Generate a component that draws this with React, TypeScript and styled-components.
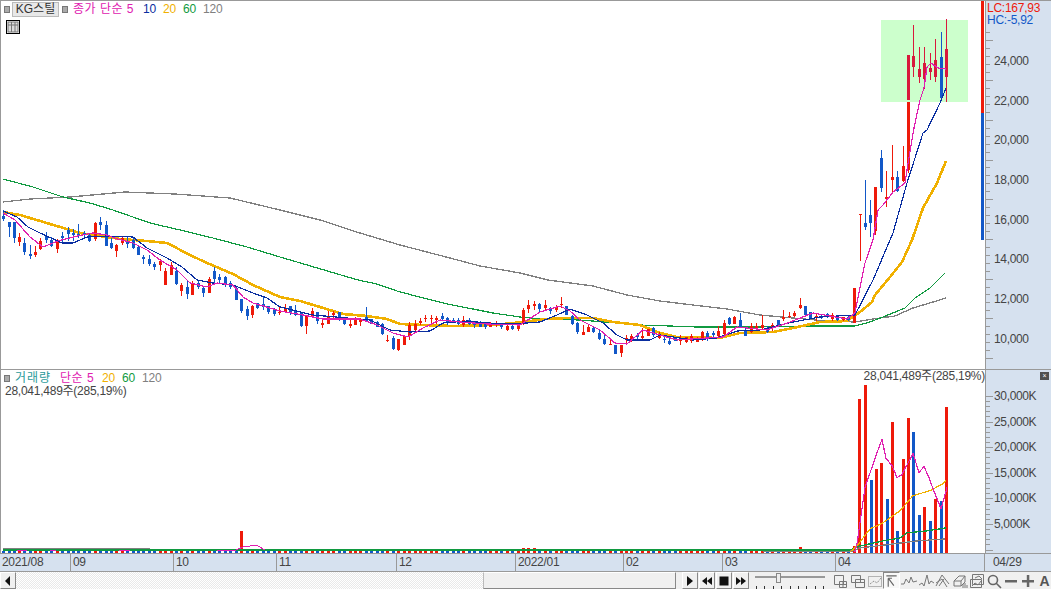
import React from "react";
import styled, { createGlobalStyle } from "styled-components";

const LINE = "#999";
const AXIS_BG = "#d6e1ef";
const TEXT = "#444";
const FONT = `"Liberation Sans", "Noto Sans CJK KR", sans-serif`;
const RED = "#ee1a0a";
const BLUE = "#1258c8";
const CRIMSON = "#d8183c";
const MAGENTA = "#e020b0";
const NAVY = "#0a2ea0";
const ORANGE = "#f0b000";
const GREEN = "#109a40";
const GRAY = "#808080";

type C = [number, string, number, number, number, number];
const candles: C[] = [
  [3,"b",216,219,210,221],[9,"b",222,227,222,237],[14,"b",222,238,222,243],[19,"r",237,242,233,246],[24,"b",243,252,238,255],
  [30,"b",254,256,245,259],[35,"r",252,255,246,257],[40,"r",241,249,238,250],[46,"b",236,240,232,243],[51,"b",240,246,237,247],
  [57,"r",241,249,239,253],[62,"b",236,238,232,242],[68,"b",230,234,227,241],[73,"b",233,235,229,241],[78,"b",234,236,224,238],
  [84,"b",233,235,231,238],[89,"b",235,241,233,242],[95,"r",223,239,222,241],[100,"b",222,225,217,230],[106,"b",225,246,221,246],
  [111,"b",243,248,238,249],[116,"r",245,251,244,257],[122,"r",238,243,236,245],[127,"b",241,244,237,248],[133,"b",240,248,238,249],
  [138,"b",247,255,245,255],[143,"b",257,259,255,264],[149,"b",259,264,255,266],[154,"b",264,267,262,270],[160,"r",261,265,259,271],
  [165,"r",271,285,268,285],[171,"r",265,275,262,275],[176,"b",271,284,267,285],[181,"r",285,291,283,296],[187,"b",287,294,281,299],
  [192,"r",283,295,281,295],[198,"b",283,287,280,289],[203,"b",288,293,287,297],[209,"r",279,293,277,293],[214,"b",271,279,267,283],
  [219,"b",277,280,274,283],[225,"b",277,284,276,287],[230,"b",283,287,281,289],[236,"b",288,300,287,300],[241,"b",299,311,299,313],
  [247,"b",309,316,306,320],[252,"r",306,315,305,318],[257,"b",303,308,303,309],[263,"b",304,307,297,310],[268,"b",306,312,306,314],
  [274,"b",309,314,308,316],[279,"r",312,313,307,315],[285,"r",308,312,304,313],[290,"b",306,313,306,315],[295,"b",310,315,305,316],
  [301,"b",313,326,312,327],[306,"r",315,326,315,334],[312,"r",311,317,308,317],[317,"b",312,321,312,324],[322,"r",323,325,318,328],
  [328,"r",316,324,311,324],[333,"r",313,315,311,320],[339,"b",312,319,312,321],[344,"b",319,324,317,325],[350,"r",324,326,319,328],
  [355,"r",319,325,317,325],[360,"r",319,322,318,326],[366,"b",317,321,307,321],[371,"b",319,324,319,324],[377,"b",322,327,321,327],
  [382,"b",324,334,323,335],[387,"r",340,341,335,342],[393,"b",338,349,336,350],[398,"r",339,350,339,351],[404,"r",336,345,335,345],
  [409,"r",325,336,322,340],[415,"r",324,330,320,332],[420,"r",321,323,318,325],[425,"r",318,319,315,322],[431,"r",318,319,315,323],
  [436,"r",318,320,316,324],[442,"b",316,319,313,320],[447,"b",318,322,317,325],[453,"b",320,323,318,323],[458,"b",320,324,318,325],
  [463,"r",320,325,316,327],[469,"b",320,324,318,325],[474,"b",322,325,321,328],[480,"b",323,327,321,327],[485,"b",324,327,323,329],
  [490,"r",324,327,322,327],[496,"r",324,325,321,327],[501,"b",325,327,323,329],[507,"r",326,330,323,331],[512,"b",326,329,325,330],
  [518,"r",325,329,323,331],[523,"r",310,324,308,325],[528,"r",305,309,300,313],[534,"r",304,306,301,310],[539,"b",304,309,303,312],
  [545,"r",305,308,300,310],[550,"b",308,311,307,314],[556,"r",307,310,305,312],[561,"r",304,305,297,308],[566,"b",306,315,306,315],
  [572,"b",316,324,315,325],[577,"b",323,332,322,334],[583,"r",332,335,325,335],[588,"r",327,332,325,332],[593,"b",328,332,327,333],
  [599,"b",333,339,330,340],[604,"b",339,344,335,345],[610,"r",344,345,339,345],[615,"b",345,354,345,354],[621,"r",345,353,345,357],
  [626,"r",338,339,335,343],[631,"r",336,339,334,342],[637,"b",335,337,333,341],[642,"r",336,338,328,340],[648,"r",329,336,329,336],
  [653,"b",328,335,327,337],[659,"r",336,338,332,339],[664,"b",339,340,337,343],[669,"b",341,344,337,345],[675,"b",338,341,337,341],
  [680,"r",339,341,335,345],[686,"r",337,342,337,343],[691,"r",336,341,334,343],[697,"r",339,342,337,342],[702,"r",332,340,331,341],
  [707,"b",333,339,331,341],[713,"b",333,335,331,338],[718,"r",331,336,326,337],[724,"r",323,334,320,335],[729,"b",318,324,317,325],
  [734,"r",317,324,316,324],[740,"b",320,327,313,328],[745,"b",330,336,327,336],[751,"r",326,332,323,333],[756,"r",326,328,323,330],
  [762,"r",325,328,315,329],[767,"b",328,332,326,333],[772,"r",325,328,323,331],[778,"b",320,325,320,325],[783,"r",317,319,310,321],
  [789,"r",316,317,312,318],[794,"r",313,316,311,317],[800,"r",305,308,298,309],[805,"b",306,315,306,315],[810,"b",312,318,312,319],
  [816,"r",316,317,313,321],[821,"b",316,318,314,319],[827,"b",314,317,313,318],[832,"r",315,319,313,321],[837,"b",317,320,316,321],
  [843,"r",317,320,317,321],[848,"b",317,320,316,321],[854,"r",288,323,288,323],[860,"r",214,215,214,261],[865,"b",223,227,180,230],
  [870,"b",215,223,200,237],[875,"r",187,231,187,235],[881,"b",158,188,150,192],[886,"r",197,199,171,207],[892,"r",177,180,145,194],
  [897,"b",177,191,171,192],[903,"r",166,181,146,182],[908,"r",102,170,102,173],[908,"c",55,100,55,100],[913,"c",56,67,25,77],
  [919,"c",69,77,47,83],[924,"c",63,79,47,89],[930,"c",68,72,53,80],[935,"c",60,77,39,82],[941,"b",57,98,32,100],[946,"c",49,77,19,102],
];

const ma120 = [[3,202],[30,199],[70,197],[125,192],[175,194],[230,198],[255,204],[280,210],[320,220],[360,233],[400,245],[450,258],[480,266],[520,273],[548,280],[593,286],[627,295],[660,301],[693,305],[727,309],[760,315],[793,318],[827,321],[855,322],[873,319],[895,316],[913,308],[933,302],[946,298]];
const ma60 = [[3,179],[33,187],[63,197],[90,203],[113,210],[150,223],[180,230],[213,238],[247,247],[280,257],[358,280],[377,284],[397,291],[423,298],[447,304],[473,309],[493,313],[520,317],[540,319],[580,320],[617,323],[640,325],[670,326],[697,327],[760,327],[810,326],[855,326],[867,323],[883,317],[905,308],[915,298],[930,288],[945,273]];
const ma20 = [[3,212],[20,215],[40,221],[60,227],[80,233],[100,236],[120,239],[147,241],[167,243],[190,255],[207,263],[233,274],[253,285],[280,297],[300,301],[320,307],[343,314],[367,316],[387,319],[400,324],[423,325],[453,326],[493,325],[513,323],[530,321],[547,319],[567,318],[593,318],[613,322],[640,325],[660,333],[677,337],[720,338],[740,333],[773,332],[793,328],[820,322],[847,321],[860,312],[872,302],[875,295],[890,277],[902,262],[912,240],[923,208],[937,183],[946,161]];
const ma10 = [[3,211],[17,217],[28,227],[40,233],[62,243],[73,243],[87,237],[107,236],[133,237],[147,248],[167,258],[182,267],[197,280],[213,283],[233,285],[253,293],[267,298],[280,307],[313,315],[347,318],[370,320],[390,330],[410,332],[430,331],[443,323],[467,321],[487,323],[513,324],[540,322],[557,315],[570,309],[587,315],[603,323],[617,335],[627,340],[650,340],[660,335],[693,340],[717,338],[737,331],[760,330],[793,322],[820,317],[855,315],[873,280],[893,233],[907,183],[923,133],[927,130],[940,103],[946,88]];
const ma5 = [[3,213],[15,220],[30,237],[43,247],[58,241],[77,236],[93,233],[107,235],[117,239],[133,243],[147,250],[160,260],[177,270],[190,283],[207,287],[217,283],[233,285],[243,297],[253,303],[280,311],[303,315],[323,319],[360,319],[377,325],[393,333],[408,337],[423,328],[440,320],[460,322],[487,324],[520,325],[540,312],[560,306],[570,311],[580,320],[600,330],[615,343],[627,344],[643,330],[660,335],[677,340],[707,338],[723,337],[737,327],[767,330],[790,322],[813,313],[847,319],[855,313],[865,263],[873,240],[878,210],[883,205],[893,192],[905,183],[907,170],[914,128],[920,100],[924,88],[927,67],[931,63],[938,68],[946,69]];

const volBars: [number, string, number][] = [[854,"r",545],[859,"r",399],[865,"r",385],[871,"b",479],[876,"r",468],[881,"r",462],[887,"b",498],[892,"r",422],[897,"b",530],[903,"r",459],[908,"r",418],[913,"b",432],[919,"b",514],[924,"r",506],[930,"b",520],[935,"r",498],[941,"b",500],[946,"r",407]];
const volSpikes: Record<number, number> = { 214: 548, 95: 549, 523: 547, 528: 547, 534: 547, 539: 548, 545: 548, 800: 546, 783: 549, 366: 549 };

const volMa5 = [[855,551],[857,543],[865,487],[876,455],[882,439],[886,458],[892,465],[897,477],[902,474],[913,453],[919,472],[924,466],[929,477],[933,488],[941,508],[947,487]];
const volMa20 = [[850,551],[857,545],[870,528],[883,522],[900,510],[913,495],[930,490],[943,483],[946,480]];
const volMa60 = [[3,549],[850,549],[860,545],[883,540],[900,537],[907,532],[927,530],[946,527]];
const volMa120 = [[3,548],[150,548],[151,549],[853,550],[860,547],[893,543],[917,540],[945,538]];
const volBump = [[236,549],[243,546],[250,545],[258,545],[265,549]];
const volBits = [[[17,550],[27,550]],[[50,550],[56,550]],[[119,550],[130,550]],[[217,550],[236,550]]];

const colorOf = (c: string) => (c === "r" ? RED : c === "b" ? BLUE : CRIMSON);
const pts = (a: number[][]) => a.map((p) => p.join(",")).join(" ");

const GlobalStyle = createGlobalStyle`
  html, body { margin: 0; padding: 0; background: #fff; overflow: hidden; }
  #root { width: 1051px; height: 589px; }
`;

const Page = styled.div`
  width: 1051px;
  height: 589px;
  display: flex;
  flex-direction: column;
  font-family: ${FONT};
  font-size: 12px;
  color: ${TEXT};
  background: #fff;
  overflow: hidden;
`;
const Pane = styled.section<{ $h: number; $top?: boolean }>`
  height: ${(p) => p.$h}px;
  flex: none;
  display: flex;
  box-sizing: border-box;
  border-left: 1px solid ${LINE};
  border-bottom: 1px solid ${LINE};
  border-top: ${(p) => (p.$top ? `1px solid ${LINE}` : "none")};
`;
const Plot = styled.div`
  position: relative;
  flex: 1;
  min-width: 0;
`;
const ChartSvg = styled.svg`
  display: block;
  width: 984px;
  height: 100%;
`;
const Axis = styled.div`
  position: relative;
  width: 66px;
  flex: none;
  box-sizing: border-box;
  background: ${AXIS_BG};
  border-left: 1px solid ${LINE};
`;
const AxisTicks = styled.svg`
  position: absolute;
  left: 0;
  top: 0;
  width: 8px;
  height: 100%;
`;
const Readout = styled.div`
  height: 26px;
  margin-bottom: 15px;
  padding-left: 1px;
  font-size: 12px;
  line-height: 12px;
  padding-top: 1px;
  box-sizing: border-box;
  letter-spacing: -0.25px;
  white-space: nowrap;
`;
const ReadoutLine = styled.div<{ $c: string }>`
  color: ${(p) => p.$c};
`;
const PriceLabels = styled.div`
  display: flex;
  flex-direction: column;
`;
const AxisLabel = styled.div<{ $h: number; $pad: number }>`
  height: ${(p) => p.$h}px;
  line-height: ${(p) => p.$h}px;
  padding-left: ${(p) => p.$pad}px;
  letter-spacing: -0.35px;
  white-space: nowrap;
  color: ${TEXT};
`;
const VolLabels = styled.div`
  display: flex;
  flex-direction: column;
  padding-top: 14px;
`;
const Legend = styled.div`
  position: absolute;
  left: 3px;
  top: 1px;
  display: flex;
  align-items: center;
  height: 14px;
  line-height: 13px;
  white-space: nowrap;
`;
const Marker = styled.span`
  width: 4px;
  height: 5px;
  flex: none;
  background: #aaa;
  border: 1px solid #777;
`;
const NameTag = styled.span`
  margin: 0 3px 0 2px;
  width: 47px;
  height: 15px;
  box-sizing: border-box;
  background: #e8e8e8;
  border: 1px solid #bbb;
  text-align: center;
  line-height: 13px;
  color: #333;
`;
const LegendItem = styled.span<{ $c: string; $ml: number; $w?: number; $ls?: number }>`
  color: ${(p) => p.$c};
  margin-left: ${(p) => p.$ml}px;
  ${(p) => (p.$w ? `width: ${p.$w}px;` : "")}
  letter-spacing: ${(p) => p.$ls ?? -0.2}px;
`;
const TableIcon = styled.svg`
  position: absolute;
  left: 5px;
  top: 19px;
  width: 15px;
  height: 15px;
`;
const VolNote = styled.div`
  position: absolute;
  left: 4px;
  top: 15px;
  letter-spacing: -0.25px;
  line-height: 13px;
`;
const VolHigh = styled.div`
  position: absolute;
  right: 0;
  top: 0;
  letter-spacing: -0.25px;
  line-height: 13px;
`;
const CloseMark = styled.span`
  position: absolute;
  right: 2px;
  top: 2px;
  width: 9px;
  height: 8px;
  background: #505050;
  color: #fff;
  font-size: 7px;
  line-height: 8px;
  text-align: center;
`;
const DateRow = styled.div`
  height: 19px;
  flex: none;
  box-sizing: border-box;
  display: flex;
  background: ${AXIS_BG};
  border-bottom: 1px solid ${LINE};
  border-top: 1px solid ${LINE};
  margin-top: -1px;
`;
const DateCell = styled.div<{ $w: number }>`
  width: ${(p) => p.$w}px;
  flex: none;
  box-sizing: border-box;
  border-right: 1px solid ${LINE};
  padding-left: 2px;
  line-height: 17px;
  letter-spacing: -0.3px;
  white-space: nowrap;
`;
const EndCell = styled.div`
  flex: 1;
  padding-left: 8px;
  line-height: 17px;
  letter-spacing: -0.3px;
`;
const Toolbar = styled.div`
  flex: 1;
  display: flex;
  align-items: stretch;
  background: #f0f0f0;
`;
const ScrollBtn = styled.div`
  width: 16px;
  flex: none;
  box-sizing: border-box;
  border: 1px solid;
  border-color: #fff #888 #888 #fff;
  background: #f0f0f0;
  display: flex;
  align-items: center;
  justify-content: center;
`;
const Track = styled.div`
  width: 467px;
  flex: none;
  background: repeating-conic-gradient(#e9e9e9 0 25%, #fff 0 50%) 0 0 / 2px 2px;
`;
const Thumb = styled.div`
  width: 193px;
  flex: none;
  box-sizing: border-box;
  border: 1px solid;
  border-color: #fff #888 #888 #bbb;
  background: #f0f0f0;
`;
const Controls = styled.div`
  display: flex;
  margin-left: 6px;
  gap: 1px;
`;
const ControlBtn = styled.div`
  width: 16px;
  height: 17px;
  box-sizing: border-box;
  border: 1px solid;
  border-color: #fff #888 #888 #fff;
  display: flex;
  align-items: center;
  justify-content: center;
`;
const Slider = styled.svg`
  width: 74px;
  height: 17px;
  margin-left: 5px;
  flex: none;
`;
const Tools = styled.div`
  display: flex;
  align-items: center;
  margin-left: 4px;
`;
const Tool = styled.div<{ $on?: boolean }>`
  width: 17px;
  height: 17px;
  flex: none;
  box-sizing: border-box;
  display: flex;
  align-items: center;
  justify-content: center;
  ${(p) => (p.$on ? "border: 1px solid; border-color: #888 #fff #fff #888; background: #f8f8f8;" : "")}
`;
const ToolGlyph = styled.span`
  font-family: "Liberation Sans", sans-serif;
  font-weight: bold;
  font-size: 14px;
  color: #555;
`;

const Candles = () => (
  <g shapeRendering="crispEdges">
    {candles.map(([x, c, top, bot, hi, lo], i) => {
      const col = colorOf(c);
      return (
        <g key={i}>
          <rect x={x} y={hi} width={1} height={lo - hi} fill={col} />
          <rect x={x - 1} y={top} width={3} height={Math.max(bot - top, 1)} fill={col} />
        </g>
      );
    })}
    <rect x={859} y={214} width={3} height={1} fill={RED} />
  </g>
);

const Curve = ({ d, c, w = 1 }: { d: number[][]; c: string; w?: number }) => (
  <polyline points={pts(d)} fill="none" stroke={c} strokeWidth={w} shapeRendering="crispEdges" />
);

const PriceChart = () => (
  <ChartSvg viewBox="1 1 984 368" preserveAspectRatio="none">
    <rect x={881} y={20} width={87} height={82} fill="#ccffcc" />
    <Curve d={ma120} c={GRAY} w={1.3} />
    <Curve d={ma60} c={GREEN} w={1.2} />
    <Curve d={ma20} c={ORANGE} w={2.6} />
    <Candles />
    <Curve d={ma10} c={NAVY} w={1.2} />
    <Curve d={ma5} c={MAGENTA} w={1.2} />
    <rect x={981} y={1} width={3} height={112} fill={RED} shapeRendering="crispEdges" />
    <rect x={981} y={113} width={3} height={127} fill={BLUE} shapeRendering="crispEdges" />
  </ChartSvg>
);

const VolumeChart = () => (
  <ChartSvg viewBox="1 370 984 182" preserveAspectRatio="none">
    <g shapeRendering="crispEdges">
      {candles
        .filter(([x, c]) => x < 850 && c !== "c")
        .map(([x, c], i) => {
          const top = volSpikes[x] ?? 550;
          return <rect key={i} x={x - 1} y={top} width={3} height={552 - top} fill={colorOf(c)} />;
        })}
      <rect x={240} y={530} width={3} height={22} fill={RED} />
      {volBars.map(([x, c, top], i) => (
        <rect key={i} x={x - 1} y={top} width={3} height={552 - top} fill={colorOf(c)} />
      ))}
    </g>
    <Curve d={volMa120} c={GRAY} w={1.3} />
    <Curve d={volMa60} c={GREEN} w={1.3} />
    <Curve d={volMa20} c={ORANGE} w={1.2} />
    <Curve d={volBump} c={MAGENTA} w={1} />
    {volBits.map((b, i) => (
      <Curve key={i} d={b} c={MAGENTA} w={1} />
    ))}
    <Curve d={volMa5} c={MAGENTA} w={1.2} />
  </ChartSvg>
);

const ticks = (start: number, step: number, n: number, every: number, from = 0) =>
  Array.from({ length: n }, (_, i) => {
    const y = Math.round(start + i * step);
    const long = i % every === 0;
    return y < from ? null : <rect key={i} x={0} y={y} width={long ? 7 : 4} height={1} fill={LINE} />;
  });

const priceLabels = ["24,000", "22,000", "20,000", "18,000", "16,000", "14,000", "12,000", "10,000"];
const volLabels = ["30,000K", "25,000K", "20,000K", "15,000K", "10,000K", "5,000K"];
const months: [string, number][] = [["2021/08", 71], ["09", 103], ["10", 103], ["11", 120], ["12", 119], ["2022/01", 108], ["02", 99], ["03", 113], ["04", 149]];

const Play = () => <svg width="12" height="12" viewBox="0 0 12 12"><path d="M3 1 L9 6 L3 11Z" fill="#111" /></svg>;
const Rew = () => <svg width="12" height="12" viewBox="0 0 12 12"><path d="M6 2 L1 6 L6 10Z M11 2 L6 6 L11 10Z" fill="#111" /></svg>;
const Stop = () => <svg width="12" height="12" viewBox="0 0 12 12"><rect x="1.5" y="1.5" width="9" height="9" fill="#111" /></svg>;
const Ff = () => <svg width="12" height="12" viewBox="0 0 12 12"><path d="M1 2 L6 6 L1 10Z M6 2 L11 6 L6 10Z" fill="#111" /></svg>;
const Left = () => <svg width="10" height="12" viewBox="0 0 10 12"><path d="M7 1 L2 6 L7 11Z" fill="#111" /></svg>;

const ic = { fill: "none", stroke: "#777", strokeWidth: 1 };
const icons = [
  <path key="0" {...ic} d="M1.5 2.5h9v9h-9z M6.5 8.5h7v6h-7z M10 8.5v6 M6.5 11.5h7" />,
  <path key="1" {...ic} d="M1.5 2.5h9v7h-9z M5.5 6.5h9v8h-9z M5.5 9.5h9" />,
  <path key="2" {...ic} strokeDasharray="1 1" d="M1.5 3.5h13v10h-13z M3 11l4-3 3 2 4-5" />,
  <path key="3" stroke="#666" fill="none" strokeWidth="1.2" d="M2.5 2.5h11 M4.5 14V5 M4.5 5l6 8 M4.5 5h4 M4.5 5v4" />,
  <path key="4" {...ic} d="M0 11h3l2-5 3 4 2-6 2 5 4-1" />,
  <path key="5" {...ic} d="M1 12l3-2 2 3 3-11 2 9 2-3 3 2" />,
  <path key="6" {...ic} d="M1 13l6-11 7 9 M1 10l6-4 5 8 M4 13l5-7" />,
  <path key="7" {...ic} d="M2 8l5-5h6v6l-4 4H2z M2 8h7v5 M9 8l4-5 M11 11v4 M13 10v5 M15 12v3" />,
  <path key="8" {...ic} d="M3.5 1.5h11v10h-11z M1.5 6.5h11v8h-11z M3 13l3-3 3 2 3-4 M6 5l4-2 3 3" />,
  <path key="9" fill="none" stroke="#666" strokeWidth="1.6" d="M2.5 7a4.5 4.5 0 1 0 9 0a4.5 4.5 0 1 0-9 0 M10.5 10.5l4.5 4.5" />,
  <path key="10" fill="#666" d="M2 7h12v2.5H2z" />,
  <path key="11" fill="#666" d="M2 7h12v2.5H2z M6.8 2h2.5v12H6.8z" />,
];

export default function App() {
  return (
    <Page>
      <GlobalStyle />
      <Pane $h={370} $top>
        <Plot>
          <PriceChart />
          <Legend>
            <Marker />
            <NameTag>KG스틸</NameTag>
            <Marker />
            <LegendItem $c={MAGENTA} $ml={5} $w={65} $ls={0.5}>종가 단순 5</LegendItem>
            <LegendItem $c={NAVY} $ml={5} $w={15}>10</LegendItem>
            <LegendItem $c={ORANGE} $ml={5} $w={15}>20</LegendItem>
            <LegendItem $c={GREEN} $ml={5} $w={15}>60</LegendItem>
            <LegendItem $c={GRAY} $ml={5}>120</LegendItem>
          </Legend>
          <TableIcon viewBox="0 0 15 15">
            <rect x="0.5" y="0.5" width="13" height="13" fill="#fff" stroke="#000" />
            <rect x="2" y="2" width="10" height="10" fill="#ddd" stroke="#777" />
            <path d="M2 5h10 M5.5 2v10 M9 2v10" stroke="#777" fill="none" />
          </TableIcon>
        </Plot>
        <Axis>
          <AxisTicks viewBox="0 0 8 368" preserveAspectRatio="none">
            <g shapeRendering="crispEdges">{ticks(-0.3, 7.94, 46, 5, 28)}</g>
          </AxisTicks>
          <Readout>
            <ReadoutLine $c={RED}>LC:167,93</ReadoutLine>
            <ReadoutLine $c={BLUE}>HC:-5,92</ReadoutLine>
          </Readout>
          <PriceLabels>
            {priceLabels.map((l) => (
              <AxisLabel key={l} $h={39.7} $pad={8}>{l}</AxisLabel>
            ))}
          </PriceLabels>
        </Axis>
      </Pane>
      <Pane $h={184}>
        <Plot>
          <VolumeChart />
          <Legend>
            <Marker />
            <LegendItem $c="#2a9a9a" $ml={5} $w={37} $ls={1}>거래량</LegendItem>
            <LegendItem $c={MAGENTA} $ml={8} $w={36} $ls={0.5}>단순 5</LegendItem>
            <LegendItem $c={ORANGE} $ml={6} $w={14}>20</LegendItem>
            <LegendItem $c={GREEN} $ml={6} $w={14}>60</LegendItem>
            <LegendItem $c={GRAY} $ml={6}>120</LegendItem>
          </Legend>
          <VolNote>28,041,489주(285,19%)</VolNote>
          <VolHigh>28,041,489주(285,19%)</VolHigh>
        </Plot>
        <Axis>
          <AxisTicks viewBox="0 0 8 183" preserveAspectRatio="none">
            <g shapeRendering="crispEdges">{ticks(26, 5.12, 31, 5)}</g>
          </AxisTicks>
          <CloseMark>×</CloseMark>
          <VolLabels>
            {volLabels.map((l) => (
              <AxisLabel key={l} $h={25.6} $pad={8}>{l}</AxisLabel>
            ))}
          </VolLabels>
        </Axis>
      </Pane>
      <DateRow>
        {months.map(([m, w]) => (
          <DateCell key={m} $w={w}>{m}</DateCell>
        ))}
        <EndCell>04/29</EndCell>
      </DateRow>
      <Toolbar>
        <ScrollBtn><Left /></ScrollBtn>
        <Track />
        <Thumb />
        <Controls>
          <ControlBtn><Play /></ControlBtn>
          <ControlBtn><Rew /></ControlBtn>
          <ControlBtn><Stop /></ControlBtn>
          <ControlBtn><Ff /></ControlBtn>
        </Controls>
        <Slider viewBox="0 0 74 17">
          <g shapeRendering="crispEdges">
            <rect x="1" y="4" width="70" height="2" fill="#999" />
            <rect x="22" y="1" width="4" height="9" fill="#eee" stroke="#888" />
            {Array.from({ length: 9 }, (_, i) => (
              <rect key={i} x={2 + i * 8.4} y={14} width={1} height={3} fill="#333" />
            ))}
          </g>
        </Slider>
        <Tools>
          {icons.map((g, i) => (
            <Tool key={i} $on={i === 3}>
              <svg width="16" height="16" viewBox="0 0 16 16">{g}</svg>
            </Tool>
          ))}
          <Tool><ToolGlyph>A</ToolGlyph></Tool>
        </Tools>
      </Toolbar>
    </Page>
  );
}
